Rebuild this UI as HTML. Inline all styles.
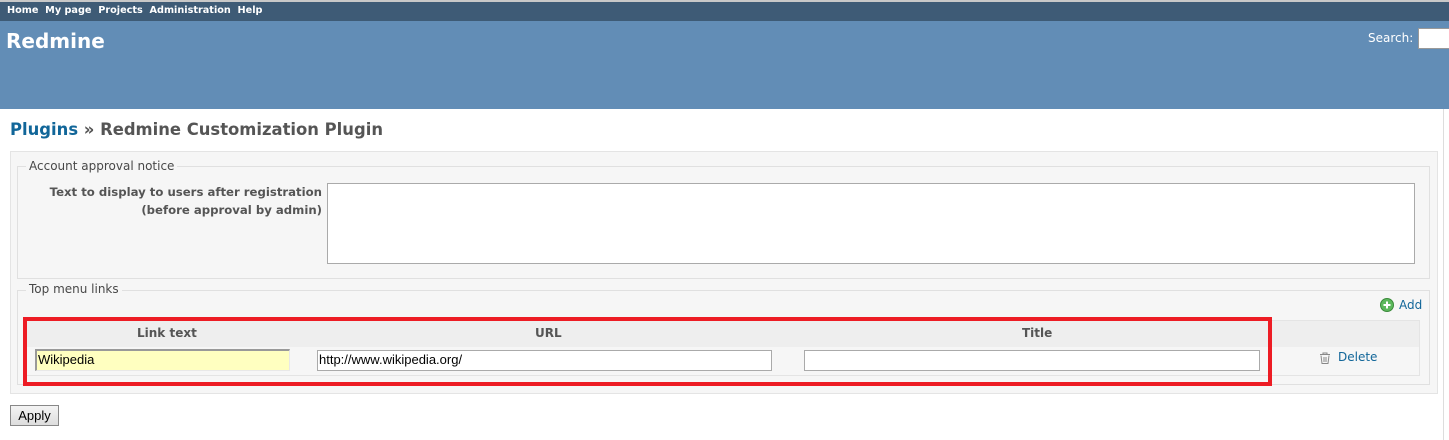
<!DOCTYPE html>
<html><head><meta charset="utf-8"><style>
*{box-sizing:border-box;margin:0;padding:0}
body{width:1449px;height:440px;position:relative;background:#fff;font-family:"DejaVu Sans","Liberation Sans",sans-serif;color:#484848;overflow:hidden}
.a{position:absolute}
</style></head><body>
<div class="a" style="left:0;top:0;width:1449px;height:2px;background:#c8c8c8"></div>
<div class="a" style="left:0;top:2px;width:1449px;height:19px;background:#3e5b76"></div>
<div class="a" style="left:7px;top:5px;font-size:9.7px;font-weight:bold;color:#fff">Home&nbsp; My page&nbsp; Projects&nbsp; Administration&nbsp; Help</div>
<div class="a" style="left:0;top:21px;width:1449px;height:88px;background:#628db6"></div>
<div class="a" style="left:6px;top:29px;font-size:20px;font-weight:bold;color:#fff">Redmine</div>
<div class="a" style="left:1368px;top:31px;font-size:12px;color:#fff">Search:</div>
<div class="a" style="left:1418px;top:28px;width:40px;height:21px;background:#fff;border:1px solid #999"></div>
<div class="a" style="left:1443px;top:109px;width:1px;height:331px;background:#ddd"></div>
<div class="a" style="left:10px;top:120px;font-size:16.4px;font-weight:bold;color:#555"><span style="color:#169">Plugins</span> » Redmine Customization Plugin</div>
<div class="a" style="left:10px;top:151px;width:1428px;height:243px;background:#f6f6f6;border:1px solid #e4e4e4"></div>
<div class="a" style="left:17px;top:166px;width:1413px;height:113px;border:1px solid #e0e0e0"></div>
<div class="a" style="left:26px;top:159px;padding:0 3px;background:#f6f6f6;font-size:12px;color:#484848">Account approval notice</div>
<div class="a" style="left:20px;top:183px;width:302px;text-align:right;font-size:11.7px;font-weight:bold;line-height:18px;color:#555">Text to display to users after registration<br>(before approval by admin)</div>
<div class="a" style="left:327px;top:183px;width:1088px;height:81px;background:#fff;border:1px solid #aaa"></div>
<div class="a" style="left:17px;top:290px;width:1413px;height:95px;border:1px solid #e0e0e0"></div>
<div class="a" style="left:26px;top:282px;padding:0 3px;background:#f6f6f6;font-size:12px">Top menu links</div>
<svg class="a" style="left:1380px;top:298px" width="14" height="14"><circle cx="7" cy="7" r="6.5" fill="#5cb85c" stroke="#3a8a3a"/><path d="M7 3.5v7M3.5 7h7" stroke="#fff" stroke-width="2"/></svg>
<div class="a" style="left:1399px;top:298px;font-size:12px;color:#169">Add</div>
<div class="a" style="left:25px;top:320px;width:1395px;height:56px;background:#f6f6f6;border:1px solid #e4e4e4"></div>
<div class="a" style="left:26px;top:321px;width:1393px;height:26px;background:#eee"></div>
<div class="a" style="left:137px;top:326px;font-size:12px;font-weight:bold;color:#555">Link text</div>
<div class="a" style="left:535px;top:326px;font-size:12px;font-weight:bold;color:#555">URL</div>
<div class="a" style="left:1022px;top:326px;font-size:12px;font-weight:bold;color:#555">Title</div>
<div class="a" style="left:35px;top:349px;width:255px;height:22px;background:#ffffc0;border-top:2px solid #999;border-left:2px solid #999;border-right:1px solid #e8e8e8;border-bottom:1px solid #e8e8e8;font-family:'Liberation Sans',sans-serif;font-size:13px;color:#000;padding:1px 1px">Wikipedia</div>
<div class="a" style="left:317px;top:350px;width:455px;height:21px;background:#fff;border:1px solid #aaa;font-family:'Liberation Sans',sans-serif;font-size:13px;color:#000;padding:1px 1px">http://www.wikipedia.org/</div>
<div class="a" style="left:804px;top:350px;width:456px;height:21px;background:#fff;border:1px solid #aaa"></div>
<svg class="a" style="left:1319px;top:352px" width="12" height="12"><path d="M1 2.5h10M4 2.5V1h4v1.5M2 3.5l1 8h6l1-8M5 5v5M7 5v5" stroke="#888" fill="none"/></svg>
<div class="a" style="left:1338px;top:350px;font-size:12px;color:#169">Delete</div>
<div class="a" style="left:23px;top:317px;width:1249px;height:69px;border:4px solid #ed1c24"></div>
<div class="a" style="left:10px;top:405px;width:49px;height:21px;background:linear-gradient(#f4f4f4,#ddd);border:1px solid #888;font-family:'Liberation Sans',sans-serif;font-size:13px;color:#000;text-align:center;line-height:19px">Apply</div>
</body></html>
